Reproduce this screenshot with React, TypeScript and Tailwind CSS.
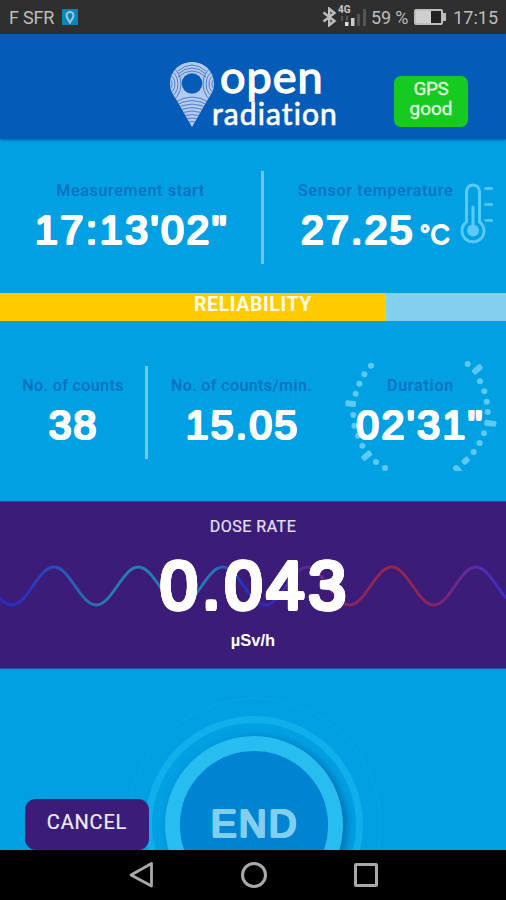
import React from "react";

const dots: number[][] = [
  [353, 77], [333, 103], [318, 131], [307, 161], [300, 225], [303, 257], [314, 287], [327, 317],
  [368, 366], [395, 384], [643, 72], [680, 124], [693, 154], [700, 185], [703, 216], [692, 280],
  [679, 309], [661, 336],
];
const dashes: number[][] = [[292, 191, 6, 32], [340, 347, -40, 34], [672, 88, -42, 34], [711, 250, 7, 36], [637, 362, -42, 24]];

const label = "font-['Roboto',sans-serif] text-[16px] font-medium leading-[20px] text-[#0070bf] whitespace-nowrap";
// Layered shadows thicken the glyphs and round their corners.
const value =
  "font-['Liberation_Sans',Arial,sans-serif] text-white whitespace-nowrap text-[41px] leading-[48px] [text-shadow:1.3px_0_#fff,-1.3px_0_#fff,0_1.3px_#fff,0_-1.3px_#fff,0.9px_0.9px_#fff,-0.9px_0.9px_#fff,0.9px_-0.9px_#fff,-0.9px_-0.9px_#fff]";

function wavePath() {
  const p = 84.4;
  let d = "";
  for (let i = 0; i < 7; i++) {
    const t = -30.4 - p / 2 + i * p;
    const a = t + p / 2;
    if (i === 0) d = `M${t} 42`;
    d += ` C${t + 16} 42 ${a - 16} 4 ${a} 4 S${t + p - 16} 42 ${t + p} 42`;
  }
  return d;
}

function Pin({ className }: { className: string }) {
  const shape = "M23 1C10.500 1 1 10.500 1 22.500C1 29 3.500 33 7 38L23 66L39 38C42.500 33 45 29 45 22.500C45 10.500 35.500 1 23 1Z";
  return (
    <svg className={className} viewBox="0 0 46 67">
      <defs>
        <clipPath id="pin"><path d={shape} /></clipPath>
      </defs>
      <path d={shape} fill="#b6c9ee" />
      <g clipPath="url(#pin)" fill="none" stroke="#4a80cd" strokeWidth="1">
        {[4, 7, 10, 13].map((r) => (
          <g key={r}>
            <ellipse cx="-1" cy="23" rx={r} ry={r * 1.35} />
            <ellipse cx="47" cy="23" rx={r} ry={r * 1.35} />
          </g>
        ))}
        {[4, 7, 10].map((y) => (
          <path key={y} d={`M9 ${y + 6}Q23 ${y - 6} 37 ${y + 6}`} />
        ))}
        {[36, 39.500, 43, 46.500, 50, 53.500, 57, 60.500].map((y) => (
          <path key={y} d={`M5 ${y + 6}Q23 ${y - 6} 41 ${y + 6}`} />
        ))}
      </g>
      <circle cx="23" cy="22.500" r="10.300" fill="#055bb8" />
    </svg>
  );
}

export default function App() {
  return (
    <div className="flex h-[900px] w-[506px] flex-col overflow-hidden bg-[#00a0e3] font-['Roboto',sans-serif]">
      <div className="flex h-[34px] shrink-0 items-center bg-[#2f2f2f] pl-[9px] pr-[8px] text-[18px] text-[#bdbdbd]">
        <span className="tracking-[-0.2px]">F SFR</span>
        <div className="ml-[8px] flex h-[16px] w-[16px] items-center justify-center bg-[#0e83b8]">
          <svg className="h-[13px] w-[10px]" viewBox="0 0 10 13">
            <path d="M1.500 4.500a3.500 3.500 0 0 1 7 0c0 2.500-2 4-3.500 7c-1.500-3-3.500-4.500-3.500-7Z" fill="none" stroke="#9cc6d8" strokeWidth="2" />
          </svg>
        </div>
        <svg className="ml-auto h-[20px] w-[15px]" viewBox="0 0 15 20">
          <path d="M1.500 5.500L12.500 14L7.200 18.300V1.700L12.500 6L1.500 14.500" fill="none" stroke="#bdbdbd" strokeWidth="2.400" />
        </svg>
        <svg className="mr-[2px] h-[24px] w-[29px]" viewBox="0 0 29 24">
          <text x="1" y="8" fontSize="10" fontWeight="700" fill="#c8c8c8" fontFamily="Roboto, sans-serif">4G</text>
          <path d="M5 11v5M10 11v5" stroke="#555" strokeWidth="2" />
          <rect x="8" y="17" width="3.500" height="4" fill="#ddd" />
          <rect x="14" y="13" width="3.500" height="8" fill="#ccc" />
          <rect x="20" y="9" width="3" height="12" fill="#555" />
          <rect x="26" y="4" width="3" height="17" fill="#555" />
        </svg>
        <span className="ml-[3px] tracking-[-0.2px]">59 %</span>
        <svg className="ml-[6px] h-[16px] w-[32px]" viewBox="0 0 32 16">
          <rect x="1" y="1" width="27" height="14" rx="1" fill="#222" stroke="#bdbdbd" strokeWidth="2" />
          <rect x="2" y="2" width="15" height="12" fill="#cfcfcf" />
          <rect x="29" y="4" width="3" height="8" fill="#bdbdbd" />
        </svg>
        <span className="ml-[7px]">17:15</span>
      </div>

      <div className="z-10 flex h-[105px] shrink-0 items-start bg-[#055bb8] pl-[169px] shadow-[0_1px_3px_rgba(0,50,110,0.6)]">
        <Pin className="mt-[27px] h-[67px] w-[46px] shrink-0" />
        <div className="-ml-[3px] mt-[20px] flex w-[126px] shrink-0 flex-col font-['Lato',sans-serif] text-white">
          <span className="ml-[8px] text-[45px] leading-[45px] tracking-[1px] [-webkit-text-stroke:1.4px_white]">open</span>
          <span className="-mt-[3px] text-[30px] leading-[34px] tracking-[1.100px] [-webkit-text-stroke:0.7px_white]">radiation</span>
        </div>
        <div className="ml-[56px] mt-[42px] flex h-[51px] w-[74px] shrink-0 flex-col items-center rounded-[7px] bg-[#16ca22] pt-[3px] text-[19px] leading-[20px] text-[#e4fbe6]">
          <span className="tracking-[-0.4px] [-webkit-text-stroke:0.3px_#e4fbe6]">GPS</span>
          <span className="[-webkit-text-stroke:0.3px_#e4fbe6]">good</span>
        </div>
      </div>

      <div className="flex h-[154px] shrink-0">
        <div className="flex w-[261px] flex-col items-center pt-[42px]">
          <span className={label + " tracking-[0.7px]"}>Measurement start</span>
          <span className={value + " mt-[5px] ml-[3px] tracking-[2.600px]"}>17:13'02"</span>
        </div>
        <div className="mt-[32px] h-[93px] w-[3px] shrink-0 bg-[#6cc8f2]" />
        <div className="ml-[34px] flex w-[156px] shrink-0 flex-col pt-[42px]">
          <span className={label + " tracking-[0.75px]"}>Sensor temperature</span>
          <div className="mt-[5px] flex items-baseline">
            <span className={value + " ml-[3px] tracking-[2.200px]"}>27.25</span>
            <span className="ml-[5px] whitespace-nowrap font-['Liberation_Sans',Arial,sans-serif] text-[27px] text-white [text-shadow:0.6px_0_#fff,-0.6px_0_#fff,0_0.6px_#fff,0_-0.6px_#fff]">°C</span>
          </div>
        </div>
        <svg className="ml-[5px] mt-[44px] h-[62px] w-[36px] shrink-0" viewBox="0 0 36 62" fill="none" stroke="#5cc9fb" strokeLinecap="round">
          <path d="M7.500 39V8.500a6.500 6.500 0 0 1 13 0V39a11 11 0 1 1-13 0Z" strokeWidth="3" />
          <path d="M14 24v22" strokeWidth="3" />
          <circle cx="14" cy="47.500" r="6" fill="#5cc9fb" stroke="none" />
          <path d="M26.500 5.500h6.500M26.500 21.500h6.500M26.500 37.500h6.500" strokeWidth="2.600" />
        </svg>
      </div>

      <div className="flex h-[28px] shrink-0 bg-[#82cff0]">
        <div className="flex w-[386px] items-center bg-[#ffcc00] pl-[194px] text-[19.5px] font-bold leading-[24px] tracking-[0.6px] text-[#fffbe8]">
          <span className="-mt-[4px]">RELIABILITY</span>
        </div>
      </div>

      <div className="flex h-[180px] shrink-0">
        <div className="flex w-[145px] flex-col items-center pt-[55px]">
          <span className={label + " ml-px tracking-[0.4px]"}>No. of counts</span>
          <span className={value + " mt-[5px] ml-[2px] tracking-[2px]"}>38</span>
        </div>
        <div className="mt-[45px] h-[93px] w-[3px] shrink-0 bg-[#6cc8f2]" />
        <div className="flex w-[187px] flex-col items-center pt-[55px]">
          <span className={label + " tracking-[0.4px]"}>No. of counts/min.</span>
          <span className={value + " mt-[5px] ml-[2px] tracking-[2.200px]"}>15.05</span>
        </div>
        <div className="relative flex w-[171px] flex-col items-center pt-[55px]">
          <svg className="absolute left-[10px] top-[39px] h-[111px] w-[160px]" viewBox="275 60 480 333" fill="#5cc9fb">
            {dots.map(([x, y]) => <circle key={`${x}-${y}`} cx={x} cy={y} r="9" />)}
            {dashes.map(([x, y, r, w]) => (
              <rect key={x} x={x - w / 2} y={y - 9} width={w} height="18" rx="5" transform={`rotate(${r} ${x} ${y})`} />
            ))}
            <path d="M598 385Q605 368 618 380L628 395H606Z" />
          </svg>
          <span className={label + " relative tracking-[0.8px]"}>Duration</span>
          <span className={value + " relative mt-[5px] tracking-[2.500px]"}>02'31"</span>
        </div>
      </div>

      <div className="relative flex h-[168px] shrink-0 flex-col items-center border-y border-[#274b9e] bg-[#3b1c79] text-white">
        <svg className="absolute left-0 top-[61px] h-[46px] w-[506px]" viewBox="0 0 506 46">
          <defs>
            <linearGradient id="wave" x1="0" x2="506" gradientUnits="userSpaceOnUse">
              <stop offset="0" stopColor="#2b2ac4" />
              <stop offset="0.060" stopColor="#2a35bd" />
              <stop offset="0.140" stopColor="#2862b5" />
              <stop offset="0.220" stopColor="#277db0" />
              <stop offset="0.420" stopColor="#2678b4" />
              <stop offset="0.480" stopColor="#2a30c4" />
              <stop offset="0.550" stopColor="#302bbc" />
              <stop offset="0.610" stopColor="#602796" />
              <stop offset="0.690" stopColor="#8b2560" />
              <stop offset="0.780" stopColor="#992548" />
              <stop offset="0.860" stopColor="#822765" />
              <stop offset="0.940" stopColor="#5c2bac" />
              <stop offset="1" stopColor="#382ed0" />
            </linearGradient>
          </defs>
          <path d={wavePath()} fill="none" stroke="url(#wave)" strokeWidth="2.800" />
        </svg>
        <span className="relative mt-[15px] text-[16px] leading-[20px] tracking-[0.5px] text-[#e6e0f4] [-webkit-text-stroke:0.2px_#e6e0f4]">DOSE RATE</span>
        <span className="relative mt-[8px] ml-[4px] font-['Liberation_Sans',Arial,sans-serif] text-[68px] leading-[80px] tracking-[4px] [text-shadow:2.2px_0_#fff,-2.2px_0_#fff,0_2.2px_#fff,0_-2.2px_#fff,1.6px_1.6px_#fff,-1.6px_1.6px_#fff,1.6px_-1.6px_#fff,-1.6px_-1.6px_#fff,2px_0.9px_#fff,-2px_0.9px_#fff,2px_-0.9px_#fff,-2px_-0.9px_#fff]">0.043</span>
        <span className="relative mt-[5px] font-['Liberation_Sans',Arial,sans-serif] text-[16.5px] font-bold leading-[20px]">µSv/h</span>
      </div>

      <div className="relative h-[181px] shrink-0 overflow-hidden">
        <div className="ml-[127px] mt-[29px] flex h-[254px] w-[254px] items-center justify-center rounded-full border border-[#0ba6e5]">
          <div className="flex h-[218px] w-[218px] shrink-0 items-center justify-center rounded-full border-[7px] border-[#10aeea]">
            <div className="flex h-[178px] w-[178px] shrink-0 items-center justify-center rounded-full border-[15px] border-[#27bdf1] bg-[#0083d0] shadow-[4px_2px_9px_rgba(0,70,130,0.55)]">
              <span className="-mt-[2px] ml-[2px] font-['Liberation_Sans',Arial,sans-serif] text-[38px] leading-[40px] tracking-[2.600px] text-[#80cef2] [text-shadow:1.4px_0_#80cef2,-1.4px_0_#80cef2,0_1.4px_#80cef2,0_-1.4px_#80cef2,1px_1px_#80cef2,-1px_1px_#80cef2,1px_-1px_#80cef2,-1px_-1px_#80cef2]">END</span>
            </div>
          </div>
        </div>
        <div className="absolute left-[25px] top-[130px] flex h-[51px] w-[124px] justify-center rounded-[11px] bg-[#3b1c79] pt-[11px] text-[20px] leading-[24px] tracking-[0.8px] text-[#f0ecf8] [-webkit-text-stroke:0.2px_#f0ecf8]">
          CANCEL
        </div>
      </div>

      <div className="flex h-[50px] shrink-0 items-center bg-black">
        <svg className="ml-[128px] h-[28px] w-[26px]" viewBox="0 0 26 28">
          <path d="M23.500 2.500V25L3 14Z" fill="none" stroke="#a9a9a9" strokeWidth="2.800" strokeLinejoin="round" />
        </svg>
        <div className="ml-[87px] h-[26px] w-[26px] rounded-full border-[3px] border-[#a9a9a9]" />
        <div className="ml-[87px] h-[24px] w-[24px] rounded-[2px] border-[3px] border-[#a9a9a9]" />
      </div>
    </div>
  );
}
